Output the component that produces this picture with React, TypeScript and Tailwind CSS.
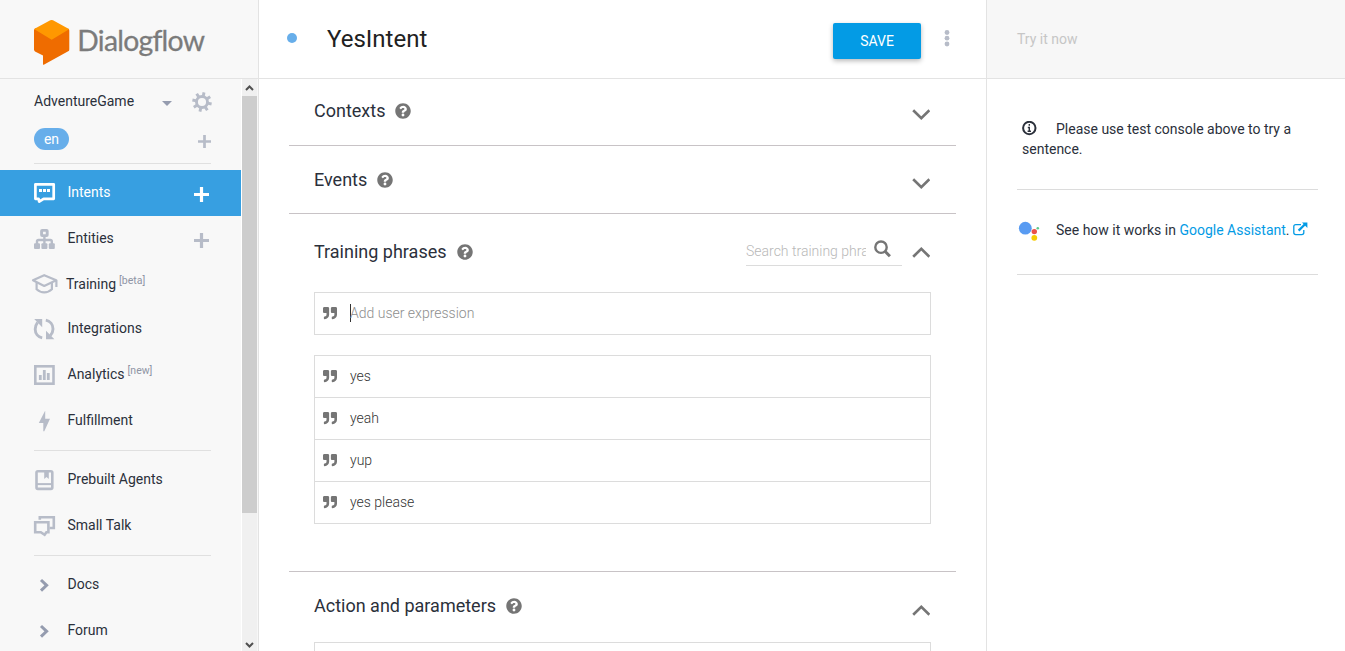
import type { ReactNode } from 'react';
import { FaQuestionCircle, FaQuoteRight } from 'react-icons/fa';

function Logo() {
  return (
    <svg width="182" height="56" viewBox="0 0 182 56" className="block" role="img" aria-label="Dialogflow">
      <path d="M10.5 11.3 Q9 11.9 9 13.4 L9 32.6 Q9 33.8 10 34.4 L18 38.6 L18 47 Q18 48.3 19.2 47.6 L43.2 34.3 Q44.3 33.7 44.3 32.4 L44.3 13.4 Q44.3 12 43 11.4 L26.7 20 Z" fill="#ef6c00" />
      <path d="M9.4 12.2 Q9.6 11.8 10.5 11.3 L25.3 3.3 Q26.7 2.6 28 3.3 L43 11.4 Q43.8 11.8 44.1 12.3 L26.7 22.7 Z" fill="#ff9800" />
      <text x="52.3" y="33.5" fontFamily="Lato, sans-serif" fontSize="28.3" fill="#7b7b7b" stroke="#7b7b7b" strokeWidth="0.3" textLength="127.6" lengthAdjust="spacing" style={{ fontVariantLigatures: 'none' }}>Dialogflow</text>
    </svg>
  );
}

function Glyph({ children }: { children: ReactNode }) {
  return (
    <svg width="30" height="30" viewBox="0 0 30 30" fill="none" stroke="currentColor" strokeWidth="2.6" className="ml-[29px] shrink-0">
      {children}
    </svg>
  );
}

const icons = {
  intents: (
    <Glyph>
      <path d="M6.4 6.3H24.7V20.8H14.6L10.2 23.6L9.6 20.8H6.4Z" strokeWidth="2.7" strokeLinejoin="round" />
      <path d="M10 12.5h3M14 12.5h3M18 12.5h3" strokeWidth="3" />
    </Glyph>
  ),
  entities: (
    <Glyph>
      <rect x="12.6" y="6.4" width="5.6" height="5.2" rx="0.6" strokeWidth="2.9" />
      <path d="M15.4 12.5V20M8 20v-2.5q0-1.5 1.5-1.5h11.8q1.5 0 1.5 1.5V20" strokeWidth="2.4" />
      <g fill="currentColor" stroke="none">
        <rect x="5" y="19.3" width="6" height="5.8" rx="1" />
        <rect x="12.4" y="19.3" width="6" height="5.8" rx="1" />
        <rect x="19.8" y="19.3" width="6" height="5.8" rx="1" />
      </g>
    </Glyph>
  ),
  training: (
    <Glyph>
      <path d="M4 11.3L15.2 6.2L27.2 11.3L15.2 17Z M27.4 11V18" strokeWidth="2.2" strokeLinejoin="round" />
      <path d="M7.6 13.5V20.2Q11 23.3 15.2 23.3Q19.6 23.3 22.9 20.2V13.5" strokeWidth="2.2" />
    </Glyph>
  ),
  integrations: (
    <Glyph>
      <path d="M8.6 8.4Q6.2 11.5 6.2 15.2C6.2 19.5 9 22.9 13.2 23.8M16.8 6.2C21 7 24 10.6 24 15Q24 18.6 21.3 21.6" strokeWidth="2.9" />
      <path d="M5.2 5H13.2V13.2ZM17 25.2H25.4L17 16.8Z" fill="currentColor" stroke="none" />
    </Glyph>
  ),
  analytics: (
    <Glyph>
      <rect x="6.3" y="6.3" width="18.2" height="17.4" />
      <path d="M11.3 20V15M15.3 20V10M19.3 20V13" strokeWidth="2.8" />
    </Glyph>
  ),
  fulfillment: (
    <Glyph>
      <path d="M16 5L9.8 17H14.3V25.3H15.3L21 12.8H16.2V5Z" fill="currentColor" stroke="none" />
    </Glyph>
  ),
  prebuilt: (
    <Glyph>
      <rect x="7.5" y="6.2" width="15.8" height="17.7" rx="1.4" />
      <path d="M8 19.1H23.5" strokeWidth="2" />
      <path d="M15.2 7H19.8V14L17.5 11.9L15.2 14Z" fill="currentColor" stroke="none" />
    </Glyph>
  ),
  smallTalk: (
    <Glyph>
      <path d="M6.2 11.2H19.4V21.2H17.4L15.6 23.8L11.8 21.2H6.2Z" />
      <path d="M10.8 8.8V6.2H24.8V17H20.5" />
    </Glyph>
  ),
  chevron: (
    <Glyph>
      <path d="M12 10L17.6 15.3L12 20.6" strokeWidth="3" stroke="#959caf" />
    </Glyph>
  ),
};

function Plus({ size, weight, className }: { size: number; weight: number; className: string }) {
  return (
    <svg width={size} height={size} viewBox={`0 0 ${size} ${size}`} className={className} stroke="currentColor" strokeWidth={weight}>
      <path d={`M0 ${size / 2}H${size}M${size / 2} 0V${size}`} />
    </svg>
  );
}

interface ItemProps {
  icon: ReactNode;
  label: string;
  tag?: string;
  plus?: boolean;
  active?: boolean;
  short?: boolean;
}

function Item({ icon, label, tag, plus, active, short }: ItemProps) {
  return (
    <div className={`flex shrink-0 items-center ${short ? 'h-[44px]' : 'h-[46px]'} ${active ? 'bg-[#379fe1] text-white' : 'text-[#b7bcc8]'}`}>
      {icon}
      <span className={`text-[14px] leading-5 whitespace-nowrap ${short ? 'ml-[7px]' : 'ml-[8.5px] pb-[2px]'} ${active ? 'text-white' : 'text-[#2b303b]'}`}>{label}</span>
      {tag && <span className={`ml-[3px] text-[10.5px] leading-4 text-[#8f95a5] ${short ? 'mb-[6px]' : 'mb-[8px]'}`}>{tag}</span>}
      {plus && <Plus size={15} weight={3.2} className="mt-[2px] mr-[32px] ml-auto" />}
    </div>
  );
}

function Divider() {
  return <div className="my-[6px] mr-[30px] ml-[34px] h-px shrink-0 bg-[#e0e0e0]" />;
}

function Gear() {
  return (
    <svg width="20" height="20" viewBox="0 0 20 20" fill="none" stroke="#b7bcc8" className="mt-[1px] ml-[20px]">
      <circle cx="10" cy="10" r="5.5" strokeWidth="2.9" />
      {[12, 57, 102, 147, 192, 237, 282, 327].map((a) => (
        <path key={a} d="M10 4.5V0.2" strokeWidth="2.9" transform={`rotate(${a} 10 10)`} />
      ))}
    </svg>
  );
}

function Scrollbar() {
  return (
    <div className="flex w-[17px] shrink-0 flex-col border-x border-l-white border-r-[#f7f7f7] bg-[#f0f0f0]">
      <svg width="15" height="17" viewBox="0 0 15 17" fill="none" stroke="#505050" strokeWidth="2">
        <path d="M4 11L7.5 7.5L11 11" />
      </svg>
      <div className="h-[417px] bg-[#cdcdcd]" />
      <svg width="15" height="17" viewBox="0 0 15 17" fill="none" stroke="#505050" strokeWidth="2" className="mt-auto mb-[-3px]">
        <path d="M4 6L7.5 9.5L11 6" />
      </svg>
    </div>
  );
}

function Sidebar() {
  return (
    <aside className="flex w-[259px] shrink-0 flex-col border-r border-[#e3e3e3] bg-[#f8f8f8]">
      <div className="h-[79px] shrink-0 border-b border-[#e3e3e3] pt-[17px] pl-[25px]">
        <Logo />
      </div>
      <div className="flex min-h-0 flex-1">
        <nav className="flex w-[241px] shrink-0 flex-col overflow-hidden">
          <div className="flex h-[45px] shrink-0 items-center pl-[34px]">
            <span className="w-[128px] pb-px text-[14px] leading-5 text-[#2b303b]">AdventureGame</span>
            <svg width="10" height="5" viewBox="0 0 10 5" fill="#959caf" className="mt-[3px]">
              <path d="M0 0H10L5 5Z" />
            </svg>
            <Gear />
          </div>
          <div className="flex h-[33px] shrink-0 items-start pt-[4px] pr-[30px] pl-[34px]">
            <span className="flex h-[22px] w-[35px] items-center justify-center rounded-full bg-[#67aeea] text-[14px] text-white">en</span>
            <Plus size={13} weight={2.7} className="mt-[7px] ml-auto text-[#b7bcc8]" />
          </div>
          <Divider />
          <Item icon={icons.intents} label="Intents" plus active />
          <Item icon={icons.entities} label="Entities" plus />
          <Item icon={icons.training} label="Training" tag="[beta]" short />
          <Item icon={icons.integrations} label="Integrations" />
          <Item icon={icons.analytics} label="Analytics" tag="[new]" />
          <Item icon={icons.fulfillment} label="Fulfillment" />
          <Divider />
          <Item icon={icons.prebuilt} label="Prebuilt Agents" />
          <Item icon={icons.smallTalk} label="Small Talk" />
          <Divider />
          <Item icon={icons.chevron} label="Docs" />
          <Item icon={icons.chevron} label="Forum" />
        </nav>
        <Scrollbar />
      </div>
    </aside>
  );
}

function Toggle({ open, className }: { open?: boolean; className: string }) {
  return (
    <svg width="18" height="11" viewBox="0 0 18 11" fill="none" stroke="#757575" strokeWidth="2.7" className={className}>
      <path d={open ? 'M1.2 9.7L9.3 1.9L17.4 9.7' : 'M1.2 1.3L9.3 9.1L17.4 1.3'} />
    </svg>
  );
}

function Heading({ children }: { children: string }) {
  return (
    <h2 className="flex items-center text-[18px] leading-6 text-[#2b303b]">
      {children}
      <FaQuestionCircle size={16} className="mb-px ml-[10px] text-[#757575]" />
    </h2>
  );
}

function Phrase({ text }: { text: string }) {
  return (
    <li className="flex h-[42px] items-center border-b border-[#dcdcdc] pl-[8px] text-[14px] font-light text-[#333]">
      <FaQuoteRight size={14} className="mr-[13px] mb-[2px] text-[#757575]" />
      {text}
    </li>
  );
}

function Main() {
  return (
    <main className="flex w-[728px] shrink-0 flex-col border-r border-[#e3e3e3] bg-white">
      <header className="flex h-[79px] shrink-0 items-start border-b border-[#e3e3e3] pl-[28px]">
        <span className="mt-[33px] size-[10px] rounded-full bg-[#67aeea]" />
        <h1 className="mt-[23px] ml-[30px] text-[24px] leading-8 text-[#212121]">YesIntent</h1>
        <button className="mt-[23px] ml-auto h-[36px] w-[88px] rounded-[2px] bg-[#039be5] text-[14px] text-white shadow-[0_2px_5px_rgba(0,0,0,0.28)]">SAVE</button>
        <svg width="6" height="18" viewBox="0 0 6 18" fill="#b7bcc8" className="mt-[29px] mr-[36px] ml-[23px]">
          <circle cx="3" cy="3.5" r="2.4" />
          <circle cx="3" cy="9.2" r="2.4" />
          <circle cx="3" cy="15" r="2.4" />
        </svg>
      </header>
      <div className="mx-[30px] flex min-h-0 flex-1 flex-col overflow-hidden">
        <section className="flex h-[67px] w-[667px] shrink-0 items-start justify-between border-b border-[#c8c3c6] pt-[20px] pr-[26px] pl-[25px]">
          <Heading>Contexts</Heading>
          <Toggle className="mt-[10px]" />
        </section>
        <section className="flex h-[68px] w-[667px] shrink-0 items-start justify-between border-b border-[#c8c3c6] pt-[22px] pr-[26px] pl-[25px]">
          <Heading>Events</Heading>
          <Toggle className="mt-[10px]" />
        </section>
        <section className="h-[358px] w-[667px] shrink-0 border-b border-[#c8c3c6] pr-[25px] pl-[25px]">
          <div className="flex h-[78px] items-start pt-[26px]">
            <Heading>Training phrases</Heading>
            <div className="mt-[-2px] ml-auto flex h-[28px] w-[156px] items-center border-b border-[#dcdcdc]">
              <span className="mb-[2px] w-[120px] overflow-hidden text-[14px] leading-5 font-light whitespace-nowrap text-[#b8b8b8]">Search training phrases</span>
              <svg width="18" height="18" viewBox="0 0 18 18" fill="none" stroke="#757575" className="mb-[5px] ml-[8px]">
                <circle cx="7" cy="7.2" r="5.7" strokeWidth="2.4" />
                <path d="M11.2 11.5L15.9 16.2" strokeWidth="3" />
              </svg>
            </div>
            <Toggle open className="mt-[7px] mr-px ml-[10px]" />
          </div>
          <div className="flex h-[43px] items-center border border-[#dcdcdc] pl-[8px]">
            <FaQuoteRight size={14} className="mr-[13px] mb-[2px] text-[#757575]" />
            <span className="mb-[2px] h-[18px] w-px bg-[#333]" />
            <span className="ml-[-1px] text-[14px] font-light text-[#8e8e8e]">Add user expression</span>
          </div>
          <ul className="mt-[20px] border-x border-t border-[#dcdcdc]">
            <Phrase text="yes" />
            <Phrase text="yeah" />
            <Phrase text="yup" />
            <Phrase text="yes please" />
          </ul>
        </section>
        <section className="w-[667px] shrink-0 pr-[25px] pl-[25px]">
          <div className="flex h-[70px] items-start justify-between pt-[22px] pr-px">
            <Heading>Action and parameters</Heading>
            <Toggle open className="mt-[11px]" />
          </div>
          <div className="h-[43px] border border-[#dcdcdc]" />
        </section>
      </div>
    </main>
  );
}

function TryPanel() {
  return (
    <aside className="flex flex-1 flex-col bg-white text-[14px] leading-5 text-[#2b303b]">
      <div className="flex h-[79px] shrink-0 items-center border-b border-[#e3e3e3] bg-[#f7f7f7] pl-[30px] text-[#c6c6c6]">Try it now</div>
      <div className="mx-[30px] h-[111px] w-[301px] border-b border-[#dcdcdc] pt-[40px] pl-[5px]">
        <svg width="15" height="15" viewBox="0 0 15 15" fill="none" stroke="#2b303b" className="mr-[19px] inline-block align-[-2px]">
          <circle cx="7.3" cy="7" r="6.2" strokeWidth="2" />
          <path d="M7.3 3V4.7M5.8 6.5H8M7.3 5.8V10.5M5.6 10.3H9" strokeWidth="1.4" />
        </svg>
        Please use test console above to try a sentence.
      </div>
      <div className="mx-[30px] flex h-[85px] w-[301px] items-center border-b border-[#dcdcdc] pb-[4px]">
        <svg width="22" height="22" viewBox="0 0 22 22" className="mt-[4px] ml-px">
          <circle cx="7.3" cy="7.2" r="6.4" fill="#589bf2" />
          <circle cx="16.3" cy="10.6" r="2.7" fill="#ea5148" />
          <circle cx="16.3" cy="16.8" r="2.9" fill="#f6cb05" />
          <circle cx="19.8" cy="7.3" r="1.3" fill="#5cc98a" />
        </svg>
        <span className="ml-[16px] whitespace-pre">See how it works in <span className="text-[#039be5]">Google Assistant</span>.</span>
        <svg width="15" height="14" viewBox="0 0 15 14" fill="none" stroke="#039be5" className="mb-[2px] ml-[3px]">
          <path d="M8 2.6H2.8Q0.8 2.6 0.8 4.6V10.8Q0.8 12.6 2.8 12.6H8.8Q10.8 12.6 10.8 10.8V8" strokeWidth="1.3" />
          <path d="M5.6 8.6L12 2.2" strokeWidth="2.2" />
          <path d="M9 0.5H14.4V5.9Z" fill="#039be5" stroke="none" />
        </svg>
      </div>
    </aside>
  );
}

export default function App() {
  return (
    <div className="flex h-[651px] w-[1345px] overflow-hidden bg-white font-['Roboto',sans-serif]">
      <Sidebar />
      <Main />
      <TryPanel />
    </div>
  );
}
